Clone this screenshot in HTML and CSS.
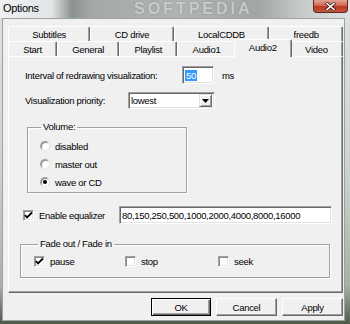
FILE: index.html
```html
<!DOCTYPE html>
<html lang="en">
<head>
    <meta charset="UTF-8">
    <title>Options</title>
    <link rel="stylesheet" href="styles.css">
</head>
<body>
    <div class="frame">
        <div class="titlebar">
            <span class="title">Options</span>
            <span class="watermark">SOFTPEDIA</span>
            <span class="close">
                <svg width="11" height="9" viewBox="0 0 11 9">
                    <path d="M2 1.5 L9 7.5 M9 1.5 L2 7.5" stroke="#3a1a1a" stroke-width="3" stroke-linecap="square"/>
                    <path d="M2 1.5 L9 7.5 M9 1.5 L2 7.5" stroke="#fff" stroke-width="1.6" stroke-linecap="square"/>
                </svg>
            </span>
        </div>
        <div class="client">
            <div class="tabs">
                <div class="tab-row back">
                    <div class="tab">Subtitles</div>
                    <div class="tab">CD drive</div>
                    <div class="tab">LocalCDDB</div>
                    <div class="tab">freedb</div>
                </div>
                <div class="tab-row front">
                    <div class="tab">Start</div>
                    <div class="tab">General</div>
                    <div class="tab">Playlist</div>
                    <div class="tab">Audio1</div>
                    <div class="tab active">Audio2</div>
                    <div class="tab">Video</div>
                </div>
                <div class="panel">
                    <div class="row interval">
                        <span class="label">Interval of redrawing visualization:</span>
                        <span class="edit short"><span class="selected">50</span></span>
                        <span class="unit">ms</span>
                    </div>
                    <div class="row priority">
                        <span class="label">Visualization priority:</span>
                        <span class="edit combo">
                            <span class="combo-text">lowest</span>
                            <span class="combo-btn">
                                <svg width="7" height="4" viewBox="0 0 7 4"><path d="M0 0 H7 L3.5 4 Z" fill="#000"/></svg>
                            </span>
                        </span>
                    </div>
                    <fieldset class="group volume">
                        <legend>Volume:</legend>
                        <div class="option"><span class="radio"></span>disabled</div>
                        <div class="option"><span class="radio"></span>master out</div>
                        <div class="option"><span class="radio on"></span>wave or CD</div>
                    </fieldset>
                    <div class="row eq">
                        <span class="check">
                            <svg width="9" height="9" viewBox="0 0 9 9"><path d="M1 4 L3 6.5 L8 1.5" fill="none" stroke="#000" stroke-width="1.8"/></svg>
                        </span>
                        <span class="eq-label">Enable equalizer</span>
                        <span class="edit wide">80,150,250,500,1000,2000,4000,8000,16000</span>
                    </div>
                    <fieldset class="group fade">
                        <legend>Fade out / Fade in</legend>
                        <div class="fade-row">
                            <div class="option">
                                <span class="check">
                                    <svg width="9" height="9" viewBox="0 0 9 9"><path d="M1 4 L3 6.5 L8 1.5" fill="none" stroke="#000" stroke-width="1.8"/></svg>
                                </span>pause
                            </div>
                            <div class="option"><span class="check"></span>stop</div>
                            <div class="option"><span class="check"></span>seek</div>
                        </div>
                    </fieldset>
                </div>
            </div>
            <div class="buttons">
                <span class="button default">OK</span>
                <span class="button">Cancel</span>
                <span class="button">Apply</span>
            </div>
        </div>
    </div>
</body>
</html>
```

FILE: styles.css
```css
* {
    box-sizing: border-box;
}
body {
    margin: 0;
    width: 350px;
    height: 324px;
    overflow: hidden;
    font-family: "Liberation Sans", Arial, sans-serif;
    font-size: 9.5px;
    letter-spacing: -0.3px;
    color: #000;
    background: linear-gradient(to bottom, #dfe2e3 0, #cfd4d2 50%, #a7b3a2 88%, #4d5a47 100%);
}
.frame {
    display: flex;
    flex-direction: column;
    height: 324px;
}
.titlebar {
    position: relative;
    flex: none;
    height: 18px;
    display: flex;
    align-items: flex-start;
    background: linear-gradient(to right, #eef0f1 0, #e2e5e6 52px, #8c9192 72px, #a4a8a8 92px, #b1b4b3 180px, #a2a6a5 260px, #c6c9c9 300px, #dfe1e2 350px);
}
.title {
    position: relative;
    z-index: 1;
    padding: 3px 0 0 3px;
    font-size: 11px;
    line-height: 11px;
}
.watermark {
    position: absolute;
    left: 134px;
    top: 0;
    font-size: 16px;
    line-height: 18px;
    font-weight: bold;
    letter-spacing: 3px;
    color: rgba(218, 221, 221, 0.75);
    text-shadow: 0 0 2px rgba(110, 110, 110, 0.5);
}
.close {
    position: relative;
    z-index: 1;
    margin-left: auto;
    margin-right: 2px;
    width: 35px;
    height: 13px;
    display: flex;
    align-items: center;
    justify-content: center;
    background: linear-gradient(to bottom, #e3a193 0, #cf6a55 45%, #b83a22 55%, #c9543c 100%);
    border: 1px solid #5a2a22;
    border-top: none;
    border-radius: 0 0 4px 4px;
}
.client {
    flex: 1;
    margin: 0 5px 3px 2px;
    background: #f0f0f0;
    border: 1px solid #9ba1a4;
    padding: 7px 1px 0 5px;
    display: flex;
    flex-direction: column;
}
.tabs {
    display: flex;
    flex-direction: column;
}
.tab-row {
    display: flex;
    height: 15px;
}
.tab {
    flex: 1 1 auto;
    text-align: center;
    padding-top: 2px;
    line-height: 12px;
    white-space: nowrap;
    border-top: 1px solid #fff;
    border-left: 1px solid #fff;
    border-right: 1px solid #696969;
    box-shadow: inset -1px 0 0 #a0a0a0;
    border-radius: 2px 2px 0 0;
}
.tab.active {
    position: relative;
    z-index: 1;
    margin: -2px -2px -1px;
    height: 18px;
    padding-top: 2px;
    background: #f0f0f0;
}
.panel {
    height: 237px;
    border-top: 1px solid #fff;
    border-left: 1px solid #fff;
    border-right: 1px solid #696969;
    border-bottom: 1px solid #696969;
    box-shadow: inset -1px -1px 0 #a0a0a0;
    padding: 9px 0 0 16px;
}
.row {
    display: flex;
    align-items: center;
}
.edit {
    display: flex;
    align-items: center;
    background: #fff;
    border: 1px solid;
    border-color: #a0a0a0 #fff #fff #a0a0a0;
    box-shadow: inset 1px 1px 0 #696969, inset -1px -1px 0 #e3e3e3;
    padding-left: 2px;
    white-space: nowrap;
}
.interval {
    height: 18px;
}
.interval .label {
    width: 157px;
}
.edit.short {
    width: 32px;
    height: 18px;
}
.selected {
    background: #3399ff;
    color: #fff;
    padding: 0 1px;
}
.unit {
    margin-left: 8px;
}
.priority {
    margin-top: 8px;
    height: 17px;
}
.priority .label {
    width: 103px;
}
.edit.combo {
    width: 87px;
    height: 17px;
    justify-content: space-between;
    padding-right: 2px;
}
.combo-btn {
    width: 13px;
    height: 13px;
    display: flex;
    align-items: center;
    justify-content: center;
    background: #f0f0f0;
    border: 1px solid;
    border-color: #e3e3e3 #696969 #696969 #e3e3e3;
    box-shadow: inset 1px 1px 0 #fff, inset -1px -1px 0 #a0a0a0;
}
.group {
    margin: 0;
    border: 1px solid #a0a0a0;
    box-shadow: inset 1px 1px 0 #fff, 1px 1px 0 #fff;
    min-width: 0;
}
.group legend {
    padding: 0 2px;
    line-height: 12px;
}
.volume {
    margin: 12px 0 0 2px;
    width: 160px;
    height: 72px;
    padding: 4px 0 0 12px;
}
.volume legend {
    margin-left: 1px;
}
.option {
    display: flex;
    align-items: center;
    height: 18px;
}
.radio {
    width: 10px;
    height: 10px;
    margin-right: 5px;
    border-radius: 50%;
    background: #fff;
    border: 1px solid;
    border-color: #a0a0a0 #e3e3e3 #e3e3e3 #a0a0a0;
    box-shadow: inset 1px 1px 0 #8a8a8a;
    display: flex;
    align-items: center;
    justify-content: center;
}
.radio.on::after {
    content: "";
    width: 4px;
    height: 4px;
    border-radius: 50%;
    background: #000;
}
.check {
    width: 11px;
    height: 11px;
    margin-right: 5px;
    background: #fff;
    border: 1px solid;
    border-color: #a0a0a0 #fff #fff #a0a0a0;
    box-shadow: inset 1px 1px 0 #8a8a8a, inset -1px -1px 0 #e3e3e3;
    display: flex;
    align-items: center;
    justify-content: center;
}
.eq {
    margin: 13px 0 0 -2px;
    height: 18px;
}
.eq-label {
    width: 80px;
}
.edit.wide {
    width: 213px;
    height: 18px;
}
.fade {
    margin: 14px 0 0 -5px;
    width: 310px;
    height: 40px;
    padding: 2px 0 0 13px;
}
.fade legend {
    margin-left: 4px;
}
.fade-row {
    display: grid;
    grid-template-columns: 91px 93px auto;
}
.buttons {
    display: flex;
    justify-content: flex-end;
    gap: 5px;
    margin-top: 5px;
}
.button {
    width: 61px;
    height: 18px;
    display: flex;
    align-items: center;
    justify-content: center;
    background: #f0f0f0;
    border: 1px solid;
    border-color: #fff #696969 #696969 #fff;
    box-shadow: inset -1px -1px 0 #a0a0a0;
}
.button.default {
    width: 60px;
    border: 1px solid #000;
    box-shadow: inset 1px 1px 0 #fff, inset -1px -1px 0 #696969, inset -2px -2px 0 #a0a0a0;
}
```
